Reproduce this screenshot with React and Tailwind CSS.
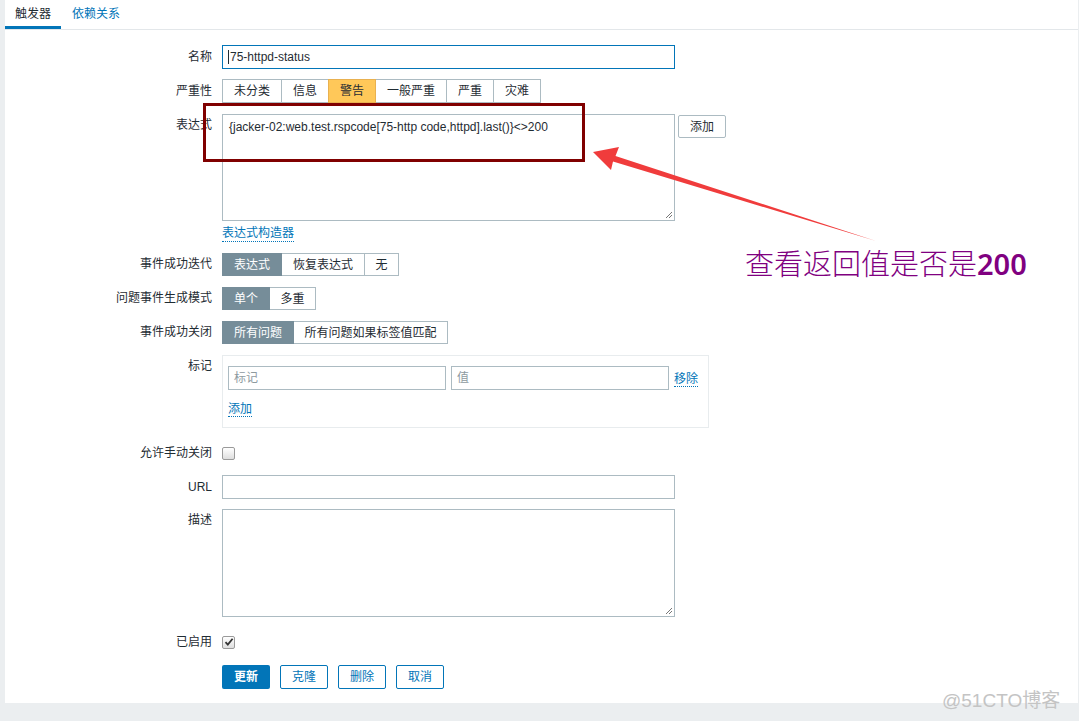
import React from "react";

const FONT = { fontFamily: '"Liberation Sans", "Noto Sans CJK SC", Arial, sans-serif' };

function Label({ children, className = "" }) {
  return (
    <div className={"w-[207px] shrink-0 text-right text-[12px] text-[#1f2c33] " + className}>
      {children}
    </div>
  );
}

function Row({ label, labelClass = "leading-[24px]", className = "", children }) {
  return (
    <div className={"flex items-start " + className}>
      <Label className={labelClass}>{label}</Label>
      <div className="ml-[10px] flex items-start">{children}</div>
    </div>
  );
}

function Seg({ items, sel, selClass = "bg-[#768d99] border-[#768d99] text-white", h = "h-[23px]" }) {
  return (
    <div className="flex">
      {items.map(([t, w], i) => (
        <div
          key={t}
          className={
            "flex items-center justify-center border text-[12px] " +
            h + " " + w + " " +
            (i > 0 ? "-ml-px " : "") +
            (i === sel ? selClass + " relative z-10" : "bg-white border-[#acbbc2] text-[#1f2c33]")
          }
        >
          {t}
        </div>
      ))}
    </div>
  );
}

function Checkbox({ checked }) {
  return (
    <div className="w-[13px] h-[13px] rounded-[2px] border border-[#9a9a9a] bg-gradient-to-b from-white to-[#dedede] flex items-center justify-center">
      {checked && (
        <svg width="10" height="10" viewBox="0 0 10 10">
          <path d="M1.5 5.2 L3.8 7.6 L8.6 1.8" stroke="#333" strokeWidth="1.8" fill="none" />
        </svg>
      )}
    </div>
  );
}

function LinkText({ children }) {
  return (
    <span className="text-[12px] leading-[15px] text-[#0275b8] border-b border-dotted border-[#0275b8]">
      {children}
    </span>
  );
}

export default function App() {
  return (
    <div className="relative w-[1079px] h-[721px] bg-[#ebeef0] overflow-hidden" style={FONT}>
      <div className="ml-[5px] w-[1073px] h-[703px] bg-white">
        {/* tabs */}
        <div className="flex h-[30px] border-b border-[#e3e7ea]">
          <div className="h-[29px] px-[10px] flex items-center text-[12px] text-[#1f2c33] border-b-[3px] border-[#0275b8] pt-[2px] w-[56px]">
            触发器
          </div>
          <div className="h-[29px] px-[10px] ml-px flex items-center text-[12px] text-[#0275b8] pb-[1px]">
            依赖关系
          </div>
        </div>

        {/* form */}
        <div className="flex flex-col">
          <Row label="名称" className="mt-[15px]">
            <div className="w-[453px] h-[24px] border border-[#0275b8] flex items-center pl-[5px] text-[12px] text-[#1f2c33]">
              <span className="w-px h-[14px] bg-[#1f2c33] mr-px" />
              75-httpd-status
            </div>
          </Row>

          <Row label="严重性" className="mt-[10px]">
            <Seg
              h="h-[24px]"
              sel={2}
              selClass="bg-[#ffc859] border-[#e9b150] text-[#1f2c33]"
              items={[
                ["未分类", "w-[60px]"],
                ["信息", "w-[48px]"],
                ["警告", "w-[48px]"],
                ["一般严重", "w-[72px]"],
                ["严重", "w-[48px]"],
                ["灾难", "w-[48px]"],
              ]}
            />
          </Row>

          <Row label="表达式" className="mt-[11px]" labelClass="leading-[16px] pt-[3px]">
            <div className="w-[453px] h-[107px] border border-[#acbbc2] px-[6px] pt-[4px] text-[12px] leading-[16px] text-[#1f2c33] relative">
              {"{jacker-02:web.test.rspcode[75-http code,httpd].last()}<>200"}
              <svg className="absolute right-[1px] bottom-[1px]" width="9" height="9" viewBox="0 0 9 9">
                <path d="M8 2 L2 8 M8 5 L5 8" stroke="#777" strokeWidth="1" />
              </svg>
            </div>
            <div className="ml-[3px] mt-px w-[48px] h-[23px] border border-[#acbbc2] rounded-[2px] flex items-center justify-center text-[12px] text-[#1f2c33]">
              添加
            </div>
          </Row>

          <Row label="" className="mt-[5px]" labelClass="h-[16px]">
            <LinkText>表达式构造器</LinkText>
          </Row>

          <Row label="事件成功迭代" className="mt-[11px]" labelClass="leading-[23px]">
            <Seg
              sel={0}
              items={[
                ["表达式", "w-[60px]"],
                ["恢复表达式", "w-[84px]"],
                ["无", "w-[35px]"],
              ]}
            />
          </Row>

          <Row label="问题事件生成模式" className="mt-[11px]" labelClass="leading-[23px]">
            <Seg
              sel={0}
              items={[
                ["单个", "w-[48px]"],
                ["多重", "w-[47px]"],
              ]}
            />
          </Row>

          <Row label="事件成功关闭" className="mt-[11px]" labelClass="leading-[23px]">
            <Seg
              sel={0}
              items={[
                ["所有问题", "w-[72px]"],
                ["所有问题如果标签值匹配", "w-[155px]"],
              ]}
            />
          </Row>

          <Row label="标记" className="mt-[11px]" labelClass="leading-[16px] pt-[3px]">
            <div className="w-[487px] h-[73px] border border-[#e8ecee] pl-[5px] pt-[10px]">
              <div className="flex items-center">
                <div className="w-[218px] h-[24px] border border-[#acbbc2] flex items-center pl-[5px] text-[12px] text-[#8e9a9f]">
                  标记
                </div>
                <div className="ml-[5px] w-[218px] h-[24px] border border-[#acbbc2] flex items-center pl-[5px] text-[12px] text-[#8e9a9f]">
                  值
                </div>
                <div className="ml-[5px]">
                  <LinkText>移除</LinkText>
                </div>
              </div>
              <div className="mt-[6px]">
                <LinkText>添加</LinkText>
              </div>
            </div>
          </Row>

          <Row label="允许手动关闭" className="mt-[17px]" labelClass="leading-[16px]">
            <div className="h-[16px] flex items-center">
              <Checkbox />
            </div>
          </Row>

          <Row label="URL" className="mt-[14px]">
            <div className="w-[453px] h-[24px] border border-[#acbbc2]" />
          </Row>

          <Row label="描述" className="mt-[10px]" labelClass="leading-[16px] pt-[3px]">
            <div className="w-[453px] h-[108px] border border-[#acbbc2] relative">
              <svg className="absolute right-[1px] bottom-[1px]" width="9" height="9" viewBox="0 0 9 9">
                <path d="M8 2 L2 8 M8 5 L5 8" stroke="#777" strokeWidth="1" />
              </svg>
            </div>
          </Row>

          <Row label="已启用" className="mt-[17px]" labelClass="leading-[16px]">
            <div className="h-[16px] flex items-center">
              <Checkbox checked />
            </div>
          </Row>

          <Row label="" className="mt-[15px]" labelClass="h-[24px]">
            <div className="flex gap-[10px]">
              <div className="w-[48px] h-[24px] rounded-[2px] bg-[#0275b8] text-white text-[12px] font-bold flex items-center justify-center">
                更新
              </div>
              {["克隆", "删除", "取消"].map((t) => (
                <div
                  key={t}
                  className="w-[48px] h-[24px] rounded-[2px] border border-[#0275b8] text-[#0275b8] text-[12px] flex items-center justify-center bg-white"
                >
                  {t}
                </div>
              ))}
            </div>
          </Row>
        </div>
      </div>

      {/* annotation rectangle */}
      <div className="absolute left-[203px] top-[103px] w-[382px] h-[59px] border-[3px] border-[#800000]" />

      {/* arrow */}
      <svg className="absolute left-0 top-0" width="1079" height="721" viewBox="0 0 1079 721">
        <polygon
          points="593,152 619,147 615.5,156 876,241 613,161.5 611,170"
          fill="#f03c3c"
        />
      </svg>

      {/* annotation text */}
      <div
        className="absolute left-[745px] top-[244px] text-[29px] leading-[36px] text-[#800080] whitespace-nowrap"
        style={{ fontFamily: '"Noto Sans CJK SC", sans-serif', fontWeight: 300 }}
      >
        查看返回值是否是<span className="font-semibold" style={{ fontFamily: '"Noto Sans", "Open Sans", sans-serif' }}>200</span>
      </div>

      {/* watermark */}
      <div
        className="absolute left-[942px] top-[689px] text-[19px] leading-[24px] text-[#c4c4c4] whitespace-nowrap"
        style={{ fontFamily: '"Liberation Sans", "Noto Sans CJK SC", sans-serif' }}
      >
        @51CTO博客
      </div>
    </div>
  );
}
